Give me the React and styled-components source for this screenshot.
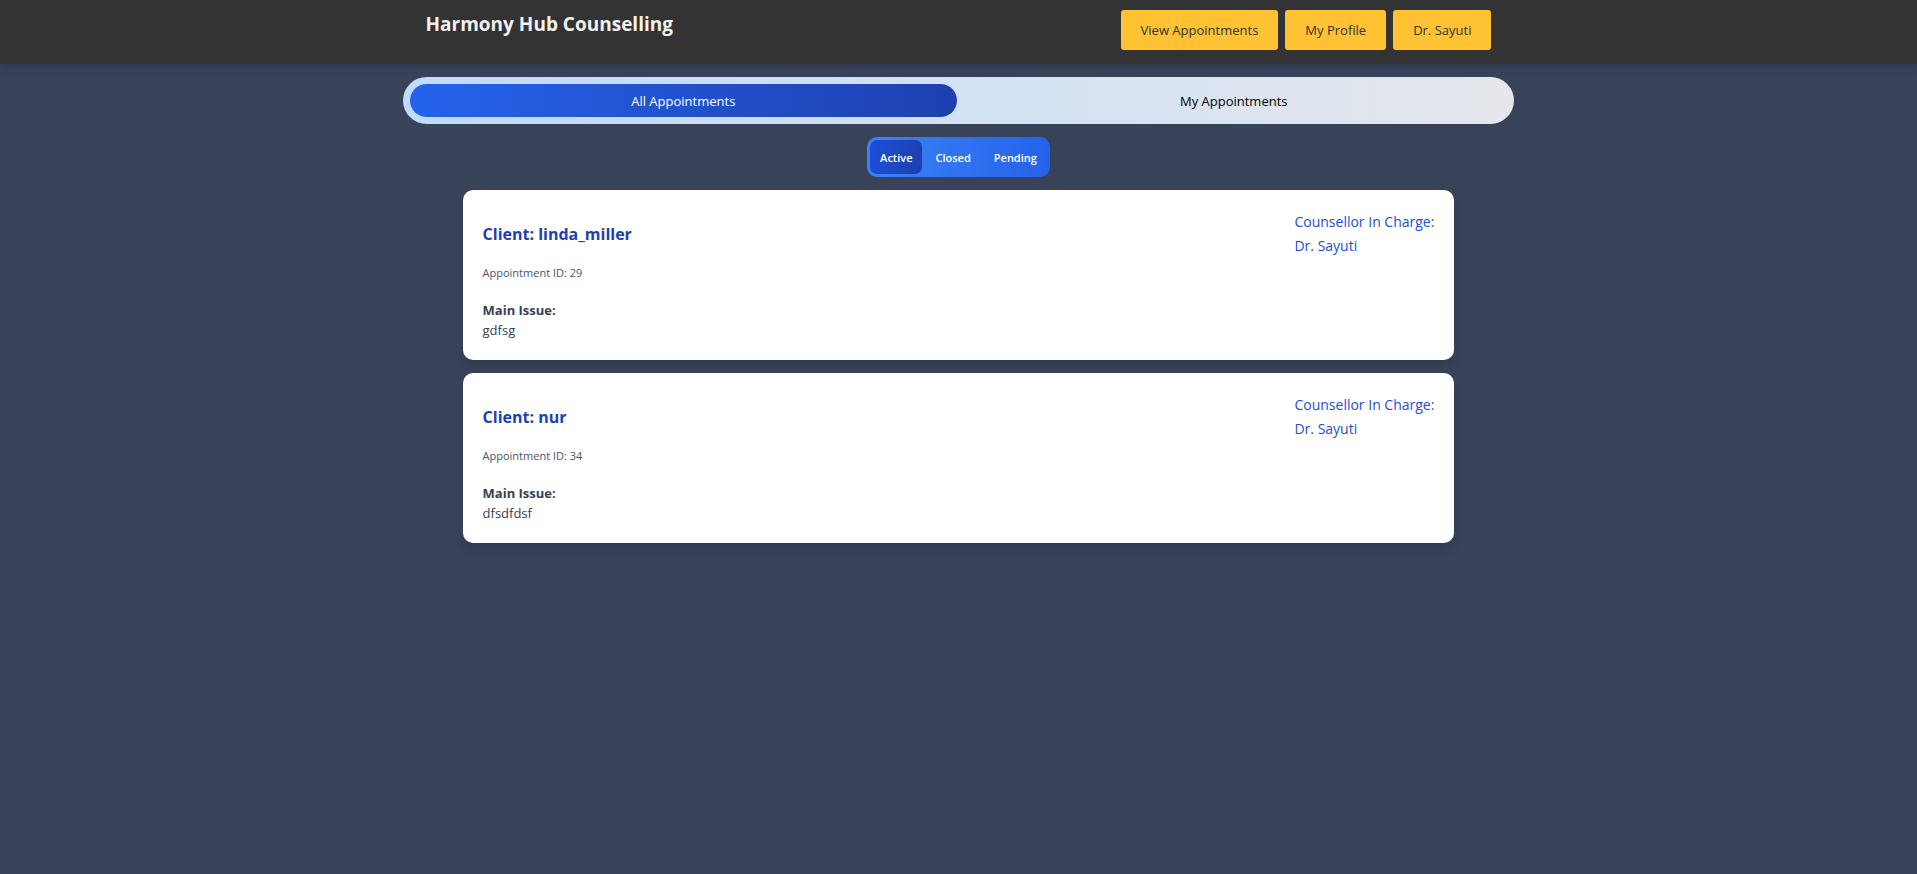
import React, { useState } from "react";
import styled, { createGlobalStyle, css } from "styled-components";

const GlobalStyle = createGlobalStyle`
  *, *::before, *::after { box-sizing: border-box; }
  body {
    margin: 0;
    min-height: 100vh;
    background: #38435a;
    font-family: "Segoe UI", "Open Sans", "Noto Sans", sans-serif;
  }
  button { font-family: inherit; border: 0; cursor: pointer; }
  h1, h2, p, dl, dt, dd { margin: 0; }
`;

const Header = styled.header`
  background: #333;
  padding: 10px 0 14px;
  box-shadow: 0 4px 8px rgba(0, 0, 0, 0.15);
`;

const HeaderInner = styled.div`
  display: flex;
  justify-content: space-between;
  align-items: flex-start;
  width: 58%;
  margin: 0 auto;
  padding: 0 23px;
`;

const Brand = styled.h1`
  font-size: 19px;
  line-height: 28px;
  font-weight: 700;
  color: #f2f2f2;
`;

const Nav = styled.nav`
  display: flex;
  gap: 7px;
`;

const NavButton = styled.button`
  height: 40px;
  padding: 0 20px;
  border-radius: 3px;
  background: #ffc233;
  color: #333;
  font-size: 13px;
  font-weight: 500;
`;

const Main = styled.main`
  display: flex;
  flex-direction: column;
  align-items: center;
  gap: 13px;
  padding: 13px 0;
`;

const ScopeTabs = styled.div`
  display: flex;
  gap: 3px;
  width: 58%;
  padding: 7px;
  border-radius: 24px;
  background: linear-gradient(to right, #bfdbfe, #e5e7eb);
`;

const ScopeTab = styled.button`
  flex: 1;
  height: 33px;
  border-radius: 17px;
  background: transparent;
  color: #000;
  font-size: 13px;
  ${({ $active }) =>
    $active &&
    css`
      background: linear-gradient(to right, #2563eb, #1e40af);
      color: #fff;
    `}
`;

const StatusTabs = styled.div`
  display: flex;
  gap: 3px;
  padding: 3px;
  border-radius: 10px;
  background: linear-gradient(to right, #3b82f6, #2563eb);
`;

const StatusTab = styled.button`
  height: 34px;
  padding: 0 10px;
  border-radius: 7px;
  background: transparent;
  color: #fff;
  font-size: 11px;
  font-weight: 600;
  ${({ $active }) =>
    $active &&
    css`
      background: linear-gradient(to right, #1d4ed8, #1e40af);
    `}
`;

const CardList = styled.section`
  display: flex;
  flex-direction: column;
  gap: 13px;
  width: 58%;
  padding: 0 60px;
`;

const Card = styled.article`
  display: flex;
  justify-content: space-between;
  align-items: flex-start;
  padding: 20px;
  border-radius: 10px;
  background: #fff;
  box-shadow: 0 7px 10px rgba(0, 0, 0, 0.12);
`;

const ClientName = styled.h2`
  padding: 12px 0;
  font-size: 16px;
  line-height: 24px;
  font-weight: 700;
  color: #1e40af;
`;

const AppointmentId = styled.p`
  padding: 5px 0 17px;
  font-size: 11px;
  line-height: 20px;
  color: #4b5563;
`;

const Issue = styled.dl`
  font-size: 13px;
  line-height: 20px;
  color: #374151;
`;

const IssueLabel = styled.dt`
  font-weight: 700;
`;

const IssueText = styled.dd`
  font-weight: 400;
`;

const Counsellor = styled.p`
  display: flex;
  flex-direction: column;
  font-size: 14px;
  line-height: 24px;
  color: #1d4ed8;
`;

const links = ["View Appointments", "My Profile", "Dr. Sayuti"];
const scopes = ["All Appointments", "My Appointments"];
const statuses = ["Active", "Closed", "Pending"];
const appointments = [
  { id: 29, client: "linda_miller", issue: "gdfsg", counsellor: "Dr. Sayuti" },
  { id: 34, client: "nur", issue: "dfsdfdsf", counsellor: "Dr. Sayuti" },
];

export default function App() {
  const [scope, setScope] = useState(scopes[0]);
  const [status, setStatus] = useState(statuses[0]);

  return (
    <>
      <GlobalStyle />
      <Header>
        <HeaderInner>
          <Brand>Harmony Hub Counselling</Brand>
          <Nav>
            {links.map((label) => (
              <NavButton key={label} type="button">{label}</NavButton>
            ))}
          </Nav>
        </HeaderInner>
      </Header>
      <Main>
        <ScopeTabs>
          {scopes.map((label) => (
            <ScopeTab
              key={label}
              type="button"
              aria-pressed={scope === label}
              $active={scope === label}
              onClick={() => setScope(label)}
            >
              {label}
            </ScopeTab>
          ))}
        </ScopeTabs>
        <StatusTabs>
          {statuses.map((label) => (
            <StatusTab
              key={label}
              type="button"
              aria-pressed={status === label}
              $active={status === label}
              onClick={() => setStatus(label)}
            >
              {label}
            </StatusTab>
          ))}
        </StatusTabs>
        <CardList>
          {appointments.map(({ id, client, issue, counsellor }) => (
            <Card key={id}>
              <div>
                <ClientName>Client: {client}</ClientName>
                <AppointmentId>Appointment ID: {id}</AppointmentId>
                <Issue>
                  <IssueLabel>Main Issue:</IssueLabel>
                  <IssueText>{issue}</IssueText>
                </Issue>
              </div>
              <Counsellor>
                <span>Counsellor In Charge:</span>
                <span>{counsellor}</span>
              </Counsellor>
            </Card>
          ))}
        </CardList>
      </Main>
    </>
  );
}
